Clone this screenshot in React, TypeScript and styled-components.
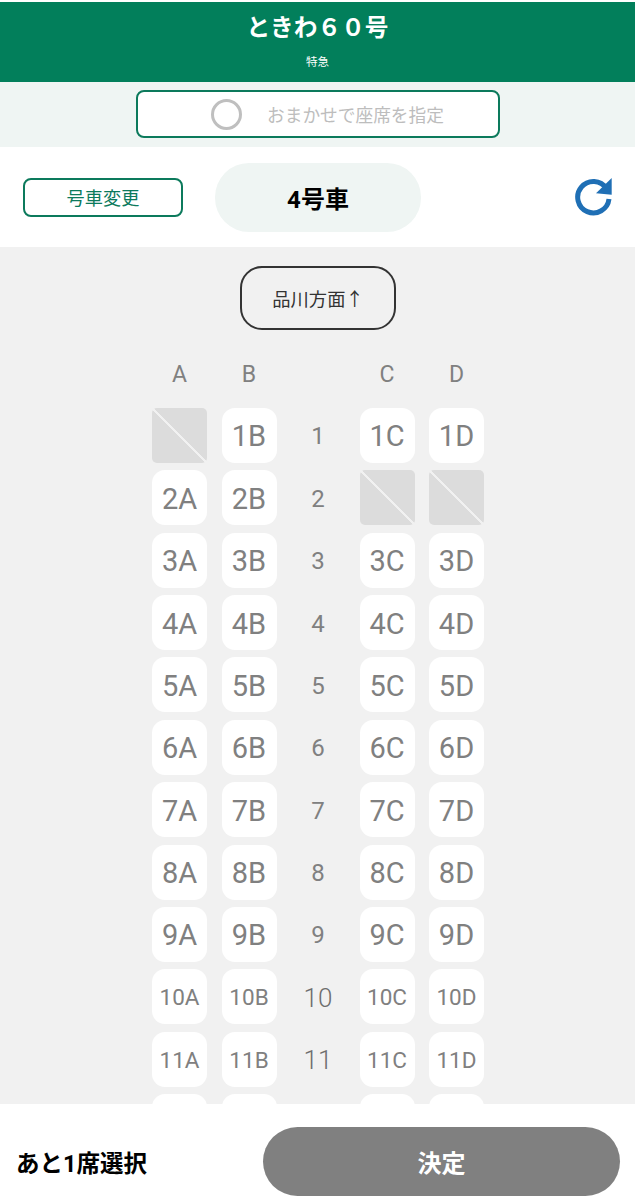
import styled, { createGlobalStyle } from "styled-components";

const rows = [1, 2, 3, 4, 5, 6, 7, 8, 9, 10, 11, 12];
const columns = ["A", "B", "C", "D"];
const blockedSeats = ["1A", "2C", "2D"];

const App = () => {
  const renderSeat = (row: number, column: string) => {
    const name = `${row}${column}`;
    if (blockedSeats.includes(name)) {
      return <BlockedSeat key={name} />;
    }
    return (
      <Seat key={name} $small={row >= 10}>
        {row === 12 ? "" : name}
      </Seat>
    );
  };

  return (
    <Page>
      <GlobalStyle />
      <Header>
        <TrainName>ときわ６０号</TrainName>
        <TrainType>特急</TrainType>
      </Header>

      <AutoStrip>
        <AutoButton>
          <Radio />
          <AutoLabel>おまかせで座席を指定</AutoLabel>
        </AutoButton>
      </AutoStrip>

      <CarBar>
        <ChangeCarButton>号車変更</ChangeCarButton>
        <CarName>4号車</CarName>
        <RefreshButton aria-label="更新">
          <svg width="40" height="40" viewBox="0 0 40 40">
            <path
              d="M32.5 12.5 A15.7 15.7 0 1 0 35 23"
              fill="none"
              stroke="#1f6fb5"
              strokeWidth="5"
            />
            <path d="M37.7 2 V18.7 L22 17.3 Z" fill="#1f6fb5" />
          </svg>
        </RefreshButton>
      </CarBar>

      <SeatArea>
        <DirectionBadge>品川方面↑</DirectionBadge>
        <SeatGrid>
          <ColumnHead>A</ColumnHead>
          <ColumnHead>B</ColumnHead>
          <span />
          <ColumnHead>C</ColumnHead>
          <ColumnHead>D</ColumnHead>
          {rows.map((row) => [
            renderSeat(row, columns[0]),
            renderSeat(row, columns[1]),
            <RowNumber key={row} $wide={row >= 10}>
              {row === 12 ? "" : row}
            </RowNumber>,
            renderSeat(row, columns[2]),
            renderSeat(row, columns[3]),
          ])}
        </SeatGrid>
      </SeatArea>

      <Footer>
        <Remaining>あと1席選択</Remaining>
        <SubmitButton>決定</SubmitButton>
      </Footer>
    </Page>
  );
};

export default App;

const GlobalStyle = createGlobalStyle`
  html, body {
    margin: 0;
    padding: 0;
    background: #fff;
  }
  * {
    box-sizing: border-box;
  }
`;

const Page = styled.div`
  width: 635px;
  height: 1200px;
  padding-top: 2px;
  display: flex;
  flex-direction: column;
  overflow: hidden;
  font-family: Roboto, "Noto Sans CJK JP", sans-serif;
`;

const Header = styled.header`
  height: 80px;
  flex: none;
  background: #027f5b;
  color: #fff;
  display: flex;
  flex-direction: column;
  align-items: center;
  padding-top: 9px;
`;

const TrainName = styled.div`
  font-size: 23.7px;
  font-weight: 700;
  line-height: 34px;
`;

const TrainType = styled.div`
  font-size: 11.5px;
  line-height: 16px;
  margin-top: 9px;
`;

const AutoStrip = styled.div`
  height: 65px;
  flex: none;
  background: #eff5f3;
  display: flex;
  justify-content: center;
  padding-top: 8px;
  padding-left: 1px;
`;

const AutoButton = styled.div`
  width: 364px;
  height: 48px;
  background: #fff;
  border: 2px solid #0c7a5c;
  border-radius: 8px;
  display: flex;
  align-items: center;
  padding-left: 73px;
`;

const Radio = styled.span`
  width: 31px;
  height: 31px;
  border: 3px solid #bfbfbf;
  border-radius: 50%;
  flex: none;
`;

const AutoLabel = styled.span`
  margin-left: 25px;
  font-size: 17.7px;
  color: #bdbdbd;
  white-space: nowrap;
`;

const CarBar = styled.div`
  height: 100px;
  flex: none;
  background: #fff;
  display: flex;
  align-items: center;
  padding-left: 23px;
`;

const ChangeCarButton = styled.div`
  width: 160px;
  height: 39px;
  border: 2px solid #0c7a5c;
  border-radius: 8px;
  color: #0c7a5c;
  font-size: 18.2px;
  display: flex;
  align-items: center;
  justify-content: center;
  flex: none;
`;

const CarName = styled.div`
  width: 206px;
  height: 69px;
  margin-left: 32px;
  border-radius: 34px;
  background: #eff5f3;
  color: #000;
  font-size: 24px;
  font-weight: 700;
  display: flex;
  align-items: center;
  justify-content: center;
  flex: none;
`;

const RefreshButton = styled.div`
  width: 40px;
  height: 40px;
  margin-left: 153px;
  margin-top: -2px;
  flex: none;
`;

const SeatArea = styled.main`
  flex: 1;
  min-height: 0;
  overflow: hidden;
  background: #f1f1f1;
  display: flex;
  flex-direction: column;
  align-items: center;
  padding: 19px 0 0 1px;
`;

const DirectionBadge = styled.div`
  width: 156px;
  height: 64px;
  border: 2px solid #333;
  border-radius: 22px;
  color: #333;
  font-size: 18.3px;
  display: flex;
  align-items: center;
  justify-content: center;
  flex: none;
`;

const SeatGrid = styled.div`
  margin-top: 26px;
  display: grid;
  grid-template-columns: 55px 55px 54px 55px 55px;
  grid-template-rows: 44.64px;
  grid-auto-rows: 55px;
  column-gap: 14.5px;
  row-gap: 7.36px;
  flex: none;
`;

const ColumnHead = styled.div`
  height: 36px;
  align-self: start;
  font-size: 23px;
  color: #808080;
  display: flex;
  align-items: center;
  justify-content: center;
`;

const Seat = styled.div<{ $small?: boolean }>`
  background: #fff;
  border-radius: 13px;
  color: #808080;
  font-size: ${(props) => (props.$small ? "22.5px" : "29px")};
  padding-top: ${(props) => (props.$small ? "1px" : "2px")};
  display: flex;
  align-items: center;
  justify-content: center;
`;

const BlockedSeat = styled.div`
  border-radius: 5px;
  background: linear-gradient(
    45deg,
    #dcdcdc calc(50% - 0.8px),
    #f1f1f1 calc(50% - 0.8px),
    #f1f1f1 calc(50% + 0.8px),
    #dcdcdc calc(50% + 0.8px)
  );
`;

const RowNumber = styled.div<{ $wide?: boolean }>`
  color: ${(props) => (props.$wide ? "#6e6e6e" : "#808080")};
  font-size: ${(props) => (props.$wide ? "26px" : "24px")};
  font-weight: ${(props) => (props.$wide ? 300 : 400)};
  padding-top: 2px;
  display: flex;
  align-items: center;
  justify-content: center;
`;

const Footer = styled.footer`
  height: 96px;
  flex: none;
  background: #fff;
  display: flex;
  align-items: center;
  justify-content: space-between;
  padding: 19px 15px 0 16px;
`;

const Remaining = styled.div`
  font-size: 23.5px;
  font-weight: 700;
  color: #000;
`;

const SubmitButton = styled.div`
  width: 357px;
  height: 69px;
  border-radius: 35px;
  background: #808080;
  color: #fff;
  font-size: 24px;
  font-weight: 700;
  display: flex;
  align-items: center;
  justify-content: center;
`;
